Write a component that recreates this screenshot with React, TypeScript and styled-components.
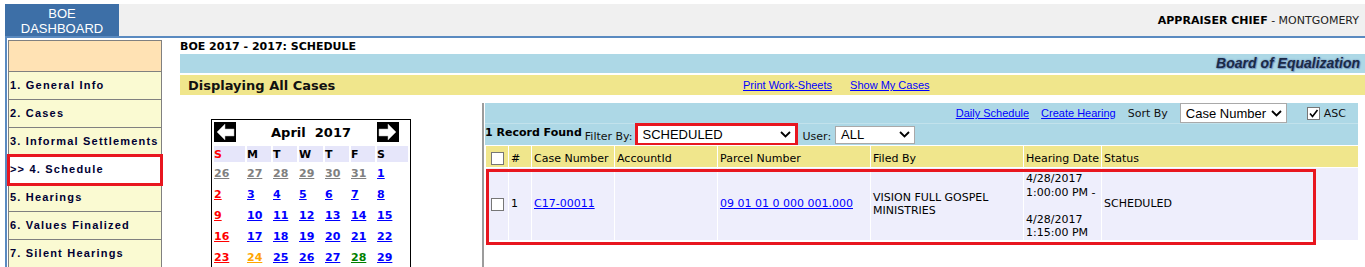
import React from 'react'
import styled, { createGlobalStyle } from 'styled-components'

const VERDANA = `"DejaVu Sans", Verdana, sans-serif`
const ARIAL = `"Liberation Sans", Arial, sans-serif`
const FLAG_RED = '#e8161f'

const GlobalStyle = createGlobalStyle`
  html, body {
    margin: 0;
    padding: 0;
    overflow: hidden;
    background: #fff;
  }
  body {
    font-family: ${VERDANA};
    font-size: 11px;
    color: #000;
  }
`

type Tone = 'muted' | 'sun' | 'today' | 'booked' | 'day'

const toneColor: Record<Tone, string> = {
  muted: '#808080',
  sun: '#ff0000',
  today: '#ffa500',
  booked: '#008000',
  day: '#0000ff',
}

const navItems = [
  '1. General Info',
  '2. Cases',
  '3. Informal Settlements',
  '>> 4. Schedule',
  '5. Hearings',
  '6. Values Finalized',
  '7. Silent Hearings',
]

const weekDays = ['S', 'M', 'T', 'W', 'T', 'F', 'S']

// april 2017, starting on the sunday before the 1st
const buildWeeks = () => {
  const cells: { n: number; tone: Tone }[] = []
  for (let d = 26; d <= 31; d++) cells.push({ n: d, tone: 'muted' })
  for (let d = 1; d <= 30; d++) {
    const tone: Tone =
      cells.length % 7 === 0 ? 'sun' : d === 24 ? 'today' : d === 28 ? 'booked' : 'day'
    cells.push({ n: d, tone })
  }
  let next = 1
  while (cells.length % 7) cells.push({ n: next++, tone: 'muted' })
  const weeks = []
  for (let i = 0; i < cells.length; i += 7) weeks.push(cells.slice(i, i + 7))
  return weeks
}

const calCols = [31, 24, 24, 24, 24, 24, 31]

const columns = [
  { label: '', w: 22, check: true },
  { label: '#', w: 22 },
  { label: 'Case Number', w: 82 },
  { label: 'AccountId', w: 102 },
  { label: 'Parcel Number', w: 152 },
  { label: 'Filed By', w: 152 },
  { label: 'Hearing Date', w: 77 },
  { label: 'Status', w: 256 },
]

const Arrow: React.FC<{ flip?: boolean }> = ({ flip }) => (
  <ArrowSvg width="22" height="20" viewBox="0 0 22 20" $flip={flip}>
    <rect width="22" height="20" fill="#000" />
    <polygon points="3,10 11,2 11,7 20,7 20,14 11,14 11,18" fill="#fff" stroke="#bbb" strokeWidth="0.5" />
  </ArrowSvg>
)

const Chevron: React.FC = () => (
  <svg width="11" height="7" viewBox="0 0 11 7">
    <polyline points="1,1 5.5,5.5 10,1" fill="none" stroke="#000" strokeWidth="1.8" />
  </svg>
)

const Checkbox: React.FC<{ checked?: boolean; ml?: number }> = ({ checked, ml }) => (
  <Check $ml={ml}>
    {checked && (
      <svg width="11" height="11" viewBox="0 0 11 11">
        <polyline points="2,5.5 4.5,8.5 9.5,2" fill="none" stroke="#000" strokeWidth="1.6" />
      </svg>
    )}
  </Check>
)

const App: React.FC = () => {
  const weeks = buildWeeks()
  return (
    <Page>
      <GlobalStyle />
      <TopBar>
        <DashTab>
          BOE
          <br />
          DASHBOARD
        </DashTab>
        <UserInfo>
          <b>APPRAISER CHIEF</b> - MONTGOMERY
        </UserInfo>
      </TopBar>

      <Layout>
        <Nav>
          <NavHead />
          {navItems.map((item, i) => (
            <NavItem key={item} $active={i === 3}>
              {item}
            </NavItem>
          ))}
        </Nav>

        <Main>
          <PageTitle>BOE 2017 - 2017: SCHEDULE</PageTitle>
          <BrandBar>
            <BrandText>Board of Equalization</BrandText>
          </BrandBar>
          <ActionBar>
            <ActionTitle>Displaying All Cases</ActionTitle>
            <ActionLinks>
              <TextLink href="#">Print Work-Sheets</TextLink>
              <TextLink href="#">Show My Cases</TextLink>
            </ActionLinks>
          </ActionBar>

          <Content>
            <CalendarCol>
              <Calendar>
                <CalTable>
                  <colgroup>
                    {calCols.map((w, i) => (
                      <CalCol key={i} $w={w} />
                    ))}
                  </colgroup>
                  <tbody>
                    <tr>
                      <ArrowCell>
                        <Arrow />
                      </ArrowCell>
                      <MonthCell colSpan={5}>April&nbsp; 2017</MonthCell>
                      <ArrowCell>
                        <Arrow flip />
                      </ArrowCell>
                    </tr>
                    <tr>
                      {weekDays.map((d, i) => (
                        <DayHead key={i} $sun={i === 0}>
                          {d}
                        </DayHead>
                      ))}
                    </tr>
                    {weeks.map((week, wi) => (
                      <tr key={wi}>
                        {week.map((c, ci) => (
                          <DateCell key={ci}>
                            <DateLink href="#" $tone={c.tone}>
                              {c.n}
                            </DateLink>
                          </DateCell>
                        ))}
                      </tr>
                    ))}
                  </tbody>
                </CalTable>
              </Calendar>
            </CalendarCol>

            <CasesCol>
              <ToolPanel>
                <ToolRow $end>
                  <TextLink href="#">Daily Schedule</TextLink>
                  <TextLink href="#">Create Hearing</TextLink>
                  <ToolLabel>Sort By</ToolLabel>
                  <Select $w={107} $h={20}>
                    Case Number
                    <Chevron />
                  </Select>
                  <AscGroup>
                    <Checkbox checked />
                    <ToolLabel $ml={4}>ASC</ToolLabel>
                  </AscGroup>
                </ToolRow>
                <ToolRow>
                  <RecordCount>1 Record Found</RecordCount>
                  <ToolLabel $ml={3} $drop={4}>
                    Filter By:
                  </ToolLabel>
                  <Select $w={163} $h={23} $ml={2} $flag>
                    SCHEDULED
                    <Chevron />
                  </Select>
                  <ToolLabel $ml={5} $drop={4}>
                    User:
                  </ToolLabel>
                  <Select $w={80} $h={18} $ml={4}>
                    ALL
                    <Chevron />
                  </Select>
                </ToolRow>
              </ToolPanel>

              <TableWrap>
                <CaseTable>
                  <thead>
                    <tr>
                      {columns.map((c, i) => (
                        <HeadCell key={i} $w={c.w}>
                          {c.check ? <Checkbox ml={3} /> : c.label}
                        </HeadCell>
                      ))}
                    </tr>
                  </thead>
                  <tbody>
                    <tr>
                      <DataCell>
                        <Checkbox ml={3} />
                      </DataCell>
                      <DataCell>1</DataCell>
                      <DataCell>
                        <TableLink href="#">C17-00011</TableLink>
                      </DataCell>
                      <DataCell />
                      <DataCell>
                        <TableLink href="#">09 01 01 0 000 001.000</TableLink>
                      </DataCell>
                      <DataCell>VISION FULL GOSPEL MINISTRIES</DataCell>
                      <DataCell $top>
                        <DateLines>
                          4/28/2017
                          <br />
                          1:00:00 PM -
                          <br />
                          <br />
                          4/28/2017
                          <br />
                          1:15:00 PM
                        </DateLines>
                      </DataCell>
                      <DataCell>SCHEDULED</DataCell>
                    </tr>
                  </tbody>
                </CaseTable>
                <RowFlag />
              </TableWrap>
            </CasesCol>
          </Content>
        </Main>
      </Layout>
    </Page>
  )
}

export default App

const Page = styled.div`
  width: 1365px;
  padding-top: 4px;
  font-family: ${VERDANA};
  font-size: 11px;
  color: #000;
`

const TopBar = styled.header`
  margin-left: 5px;
  height: 32px;
  display: flex;
  justify-content: space-between;
  background: #f0f0f0;
  border-bottom: 2px solid #5a8ac0;
`

const DashTab = styled.div`
  width: 114px;
  box-sizing: border-box;
  padding-top: 2px;
  background: #3d6fa7;
  color: #fff;
  font: 13px/15px ${ARIAL};
  text-align: center;
`

const UserInfo = styled.div`
  align-self: center;
  padding-right: 6px;
  font-size: 11px;
  color: #222;

  b {
    color: #000;
  }
`

const Layout = styled.div`
  display: flex;
  margin-left: 5px;
  border-left: 2px solid #5a8ac0;
  min-height: 240px;
`

const Nav = styled.nav`
  align-self: flex-start;
  width: 154px;
  box-sizing: border-box;
  margin: 2px 0 0 1px;
  border: 1px solid #808080;
  border-bottom: none;
`

const NavHead = styled.div`
  height: 30px;
  background: #ffe2b4;
  border-bottom: 1px solid #808080;
`

const NavItem = styled.div<{ $active?: boolean }>`
  position: relative;
  height: 27px;
  display: flex;
  align-items: center;
  padding: 0 0 1px 1px;
  box-sizing: border-box;
  height: 28px;
  border-bottom: 1px solid #808080;
  background: ${p => (p.$active ? '#fff' : '#fafad2')};
  font: bold 11px ${ARIAL};
  letter-spacing: 1.2px;
  color: #000033;
  white-space: nowrap;
  ${p => p.$active && `outline: 3px solid ${FLAG_RED}; outline-offset: -1px; z-index: 1;`}
`

const Main = styled.main`
  flex: 1;
  min-width: 0;
  margin-left: 18px;
  padding-top: 2px;
`

const PageTitle = styled.div`
  height: 14px;
  line-height: 14px;
  font-weight: bold;
  font-size: 11px;
`

const BrandBar = styled.div`
  height: 19px;
  padding-right: 5px;
  background: #add8e6;
  text-align: right;
`

const BrandText = styled.span`
  font: italic bold 14px/19px ${ARIAL};
  color: #1b2a48;
  text-shadow: 0 0 2px #5f82b0, 1px 1px 1px #7b9cc6;
`

const ActionBar = styled.div`
  margin-top: 2px;
  height: 20px;
  display: grid;
  grid-template-columns: 563px auto;
  align-items: center;
  background: #f0e68c;
`

const ActionTitle = styled.div`
  padding-left: 8px;
  font-weight: bold;
  font-size: 13px;
  color: #111;
`

const ActionLinks = styled.div`
  display: flex;
  gap: 18px;
`

const TextLink = styled.a`
  font: 11px ${ARIAL};
  color: #0000ff;
  text-decoration: underline;
`

const Content = styled.div`
  display: flex;
  align-items: flex-start;
`

const CalendarCol = styled.div`
  width: 302px;
  flex: none;
  box-sizing: border-box;
  padding: 24px 0 0 31px;
`

const Calendar = styled.div`
  width: 200px;
  box-sizing: border-box;
  border: 1px solid #000;
`

const CalTable = styled.table`
  width: 100%;
  table-layout: fixed;
  border-spacing: 2px;
`

const CalCol = styled.col<{ $w: number }>`
  width: ${p => p.$w}px;
`

const ArrowCell = styled.td`
  height: 22px;
  padding: 0;
  vertical-align: top;
`

const ArrowSvg = styled.svg<{ $flip?: boolean }>`
  display: block;
  ${p => p.$flip && 'transform: scaleX(-1);'}
`

const MonthCell = styled.td`
  padding: 0 0 2px;
  text-align: center;
  vertical-align: middle;
  font-weight: bold;
  font-size: 13px;
  white-space: nowrap;
`

const DayHead = styled.td<{ $sun?: boolean }>`
  height: 16px;
  padding: 0;
  background: #e6e6fa;
  font-weight: bold;
  font-size: 11px;
  color: ${p => (p.$sun ? '#ff0000' : '#000')};
`

const DateCell = styled.td`
  height: 19px;
  padding: 0;
  vertical-align: middle;
`

const DateLink = styled.a<{ $tone: Tone }>`
  font-weight: bold;
  font-size: 11px;
  color: ${p => toneColor[p.$tone]};
  text-decoration: underline;
`

const CasesCol = styled.div`
  flex: none;
  width: 877px;
  min-height: 170px;
  margin-top: 8px;
  padding-left: 1px;
  border-left: 2px solid #9c9c9c;
`

const ToolPanel = styled.div`
  width: 873px;
  background: #add8e6;
`

const ToolRow = styled.div<{ $end?: boolean }>`
  height: 21px;
  display: flex;
  align-items: center;
  ${p =>
    p.$end
      ? 'justify-content: flex-end; gap: 12px; padding-right: 12px; border-bottom: 1px solid #c2e2ec; height: 20px;'
      : ''}
`

const ToolLabel = styled.span<{ $ml?: number; $drop?: number }>`
  margin-left: ${p => p.$ml ?? 0}px;
  padding-top: ${p => p.$drop ?? 0}px;
  font-size: 11px;
  color: #111;
  white-space: nowrap;
`

const RecordCount = styled.span`
  padding-bottom: 5px;
  font-weight: bold;
  font-size: 11px;
  white-space: nowrap;
`

const AscGroup = styled.div`
  display: flex;
  align-items: center;
  margin-left: 8px;
`

const Select = styled.div<{ $w: number; $h: number; $ml?: number; $flag?: boolean }>`
  width: ${p => p.$w}px;
  height: ${p => p.$h}px;
  flex: none;
  box-sizing: border-box;
  margin-left: ${p => p.$ml ?? 0}px;
  padding: 0 4px 0 5px;
  display: flex;
  align-items: center;
  justify-content: space-between;
  border: ${p => (p.$flag ? `3px solid ${FLAG_RED}` : '1px solid #a9a9a9')};
  background: #fff;
  font: 13px ${ARIAL};
  color: #000;
`

const Check = styled.span<{ $ml?: number }>`
  display: inline-flex;
  align-items: center;
  justify-content: center;
  width: 13px;
  height: 13px;
  box-sizing: border-box;
  margin-left: ${p => p.$ml ?? 0}px;
  border: 1px solid #767676;
  background: #fff;
  vertical-align: middle;
`

const TableWrap = styled.div`
  position: relative;
`

const CaseTable = styled.table`
  width: 874px;
  table-layout: fixed;
  border-spacing: 1px;
  background: #fff;
`

const HeadCell = styled.th<{ $w: number }>`
  width: ${p => p.$w}px;
  box-sizing: border-box;
  height: 21px;
  padding: 3px 2px 0;
  background: #f0e68c;
  font-weight: normal;
  font-size: 11px;
  text-align: left;
  white-space: nowrap;
  overflow: hidden;
`

const DataCell = styled.td<{ $top?: boolean }>`
  height: 71px;
  padding: 0 2px;
  background: #eeeefc;
  font-size: 11px;
  vertical-align: ${p => (p.$top ? 'top' : 'middle')};
`

const DateLines = styled.div`
  padding-top: 4px;
  line-height: 13.5px;
  white-space: nowrap;
`

const TableLink = styled.a`
  color: #0000ff;
  text-decoration: underline;
  white-space: nowrap;
`

const RowFlag = styled.div`
  position: absolute;
  left: 1px;
  top: 24px;
  width: 830px;
  height: 76px;
  box-sizing: border-box;
  border: 3px solid ${FLAG_RED};
  pointer-events: none;
`
